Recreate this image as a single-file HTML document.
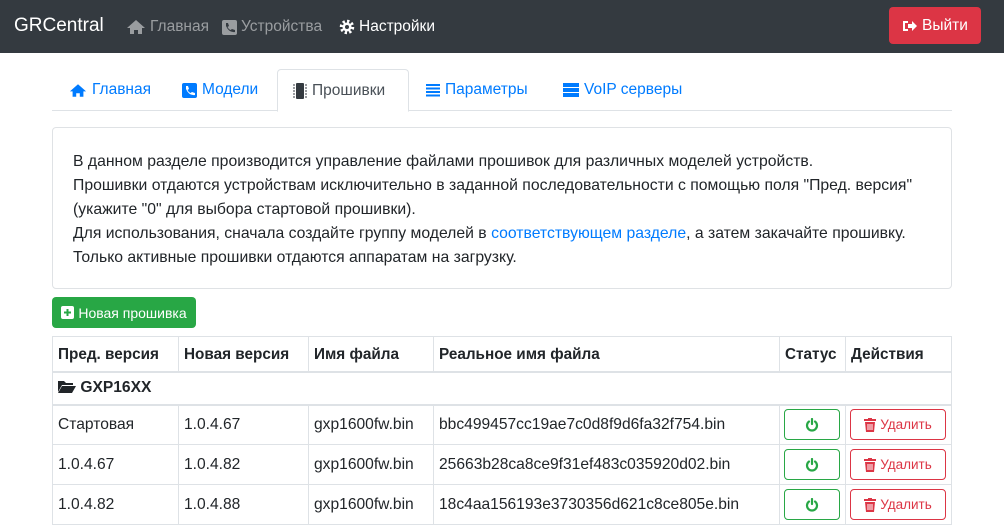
<!DOCTYPE html>
<html><head><meta charset="utf-8"><style>
*{box-sizing:border-box;margin:0;padding:0}
body{width:1004px;height:523px;overflow:hidden;background:#fff;font-family:"Liberation Sans",sans-serif;color:#212529;font-size:15px;position:relative}
.nav{position:absolute;left:0;top:0;width:1004px;height:53px;background:#343a40}
.brand{position:absolute;left:14px;top:15px;color:#fff;font-size:19px}
.nl{position:absolute;top:18px;color:#9a9da0;font-size:15.5px;display:flex;align-items:center;gap:4px}
.out{position:absolute;left:889px;top:7px;width:92px;height:37px;background:#dc3545;border-radius:4px;color:#fff;font-size:15.5px;display:flex;align-items:center;justify-content:center;gap:5px}
.tabs{position:absolute;left:52px;top:69px;width:900px;height:42px;border-bottom:1px solid #dee2e6}
.tab{position:absolute;top:0;height:42px;color:#007bff;font-size:15.5px;display:flex;align-items:center;gap:5px}
.tab.act{background:#fff;border:1px solid #dee2e6;border-bottom-color:#fff;border-radius:4px 4px 0 0;color:#495057;height:43px}
.info{position:absolute;left:52px;top:127px;width:900px;height:162px;border:1px solid #dfe2e5;border-radius:4px;padding:22px 20px;line-height:24px;font-size:15.75px}
.info a{color:#007bff;text-decoration:none}
.new{position:absolute;left:52px;top:297px;width:144px;height:31px;background:#28a745;border-radius:4px;color:#fff;font-size:14px;display:flex;align-items:center;justify-content:center;gap:4px}
table{position:absolute;left:52px;top:336px;border-collapse:collapse;width:900px;font-size:15.6px;table-layout:fixed}
td,th{border:1px solid #dee2e6;padding:0 5px;text-align:left;vertical-align:middle;white-space:nowrap}
th{height:35px;border-bottom:2px solid #dee2e6;font-weight:bold;font-size:15.3px;padding-top:2px}
tr.g td{height:33px;font-weight:bold;border-bottom:2px solid #dee2e6;padding-top:0}
tr.r td{height:40px}
.bs{width:56px;height:31px;border:1px solid #28a745;border-radius:4px;display:flex;align-items:center;justify-content:center;margin-left:-1px}
.bd{width:96px;height:31px;border:1px solid #dc3545;border-radius:4px;display:flex;align-items:center;justify-content:center;color:#dc3545;font-size:13.5px;gap:4px;margin-left:-1px}
</style></head><body>
<div class="nav">
<div class="brand">GRCentral</div>
<div class="nl" style="left:126px"><svg width="20" height="16" viewBox="0 0 20 16"><path d="M10 1L1 9h3v6h4v-4h4v4h4V9h3z" fill="#9a9da0"/></svg>Главная</div>
<div class="nl" style="left:222px"><svg width="15" height="15"><rect width="15" height="15" rx="2" fill="#9a9da0"/><path d="M4 3l2 0 1 3-1.5 1a6 6 0 0 0 3 3L10 9l3 1v2q-6 1-9-6z" fill="#343a40"/></svg>Устройства</div>
<div class="nl" style="left:339px;color:#fff"><svg width="16" height="16" viewBox="0 0 16 16"><circle cx="8" cy="8" r="5.5" fill="none" stroke="#fff" stroke-width="3.5" stroke-dasharray="2.2 2.1"/><circle cx="8" cy="8" r="4.5" fill="#fff"/><circle cx="8" cy="8" r="2" fill="#343a40"/></svg>Настройки</div>
<div class="out"><svg width="15" height="14"><path d="M1 2h5v2H3v6h3v2H1z M6 5h4V2l5 5-5 5V9H6z" fill="#fff"/></svg>Выйти</div>
</div>
<div class="tabs">
<div class="tab" style="left:17px"><svg width="18" height="15" viewBox="0 0 20 16"><path d="M10 1L1 9h3v6h4v-4h4v4h4V9h3z" fill="#007bff"/></svg>Главная</div>
<div class="tab" style="left:130px"><svg width="15" height="15"><rect width="15" height="15" rx="2" fill="#007bff"/><path d="M4 3l2 0 1 3-1.5 1a6 6 0 0 0 3 3L10 9l3 1v2q-6 1-9-6z" fill="#fff"/></svg>Модели</div>
<div class="tab act" style="left:225px;width:132px;padding-left:15px"><svg width="14" height="16"><rect x="3" y="0" width="8" height="16" rx="1" fill="#343a40"/><path d="M0 2h2M0 5h2M0 8h2M0 11h2M0 14h2M12 2h2M12 5h2M12 8h2M12 11h2M12 14h2" stroke="#343a40"/></svg>Прошивки</div>
<div class="tab" style="left:374px"><svg width="14" height="13"><path d="M0 1h14M0 4.5h14M0 8h14M0 11.5h14" stroke="#007bff" stroke-width="2"/></svg>Параметры</div>
<div class="tab" style="left:511px"><svg width="16" height="14"><rect y="0" width="16" height="4" fill="#007bff"/><rect y="5" width="16" height="4" fill="#007bff"/><rect y="10" width="16" height="4" fill="#007bff"/></svg>VoIP серверы</div>
</div>
<div class="info">В данном разделе производится управление файлами прошивок для различных моделей устройств.<br>Прошивки отдаются устройствам исключительно в заданной последовательности с помощью поля "Пред. версия"<br>(укажите "0" для выбора стартовой прошивки).<br>Для использования, сначала создайте группу моделей в <a>соответствующем разделе</a>, а затем закачайте прошивку.<br>Только активные прошивки отдаются аппаратам на загрузку.</div>
<div class="new"><svg width="13" height="13"><rect width="13" height="13" rx="2" fill="#fff"/><path d="M6.5 3v7M3 6.5h7" stroke="#28a745" stroke-width="2"/></svg>Новая прошивка</div>
<table>
<colgroup><col style="width:126px"><col style="width:130px"><col style="width:125px"><col style="width:346px"><col style="width:66px"><col></colgroup>
<tr><th>Пред. версия</th><th>Новая версия</th><th>Имя файла</th><th>Реальное имя файла</th><th>Статус</th><th>Действия</th></tr>
<tr class="g"><td colspan="6"><svg width="18" height="13" style="vertical-align:-1px"><path d="M0 1h6l2 2h7v2H4L0 12z M4 6h14l-4 7H0z" fill="#212529"/></svg> GXP16XX</td></tr>
<tr class="r"><td>Стартовая</td><td>1.0.4.67</td><td>gxp1600fw.bin</td><td>bbc499457cc19ae7c0d8f9d6fa32f754.bin</td><td><div class="bs"><svg width="14" height="14"><path d="M4 3.5a5 5 0 1 0 6 0" fill="none" stroke="#28a745" stroke-width="2.2" stroke-linecap="round"/><path d="M7 1v5" stroke="#28a745" stroke-width="2.2" stroke-linecap="round"/></svg></div></td><td><div class="bd"><svg width="12" height="14"><rect x="0" y="1" width="12" height="2" fill="#dc3545"/><rect x="4" y="0" width="4" height="2" fill="#dc3545"/><path d="M1 4h10l-1 10H2z" fill="#dc3545"/><path d="M4 6v6M6 6v6M8 6v6" stroke="#fff"/></svg>Удалить</div></td></tr>
<tr class="r"><td>1.0.4.67</td><td>1.0.4.82</td><td>gxp1600fw.bin</td><td>25663b28ca8ce9f31ef483c035920d02.bin</td><td><div class="bs"><svg width="14" height="14"><path d="M4 3.5a5 5 0 1 0 6 0" fill="none" stroke="#28a745" stroke-width="2.2" stroke-linecap="round"/><path d="M7 1v5" stroke="#28a745" stroke-width="2.2" stroke-linecap="round"/></svg></div></td><td><div class="bd"><svg width="12" height="14"><rect x="0" y="1" width="12" height="2" fill="#dc3545"/><rect x="4" y="0" width="4" height="2" fill="#dc3545"/><path d="M1 4h10l-1 10H2z" fill="#dc3545"/><path d="M4 6v6M6 6v6M8 6v6" stroke="#fff"/></svg>Удалить</div></td></tr>
<tr class="r"><td>1.0.4.82</td><td>1.0.4.88</td><td>gxp1600fw.bin</td><td>18c4aa156193e3730356d621c8ce805e.bin</td><td><div class="bs"><svg width="14" height="14"><path d="M4 3.5a5 5 0 1 0 6 0" fill="none" stroke="#28a745" stroke-width="2.2" stroke-linecap="round"/><path d="M7 1v5" stroke="#28a745" stroke-width="2.2" stroke-linecap="round"/></svg></div></td><td><div class="bd"><svg width="12" height="14"><rect x="0" y="1" width="12" height="2" fill="#dc3545"/><rect x="4" y="0" width="4" height="2" fill="#dc3545"/><path d="M1 4h10l-1 10H2z" fill="#dc3545"/><path d="M4 6v6M6 6v6M8 6v6" stroke="#fff"/></svg>Удалить</div></td></tr>
</table>
</body></html>
